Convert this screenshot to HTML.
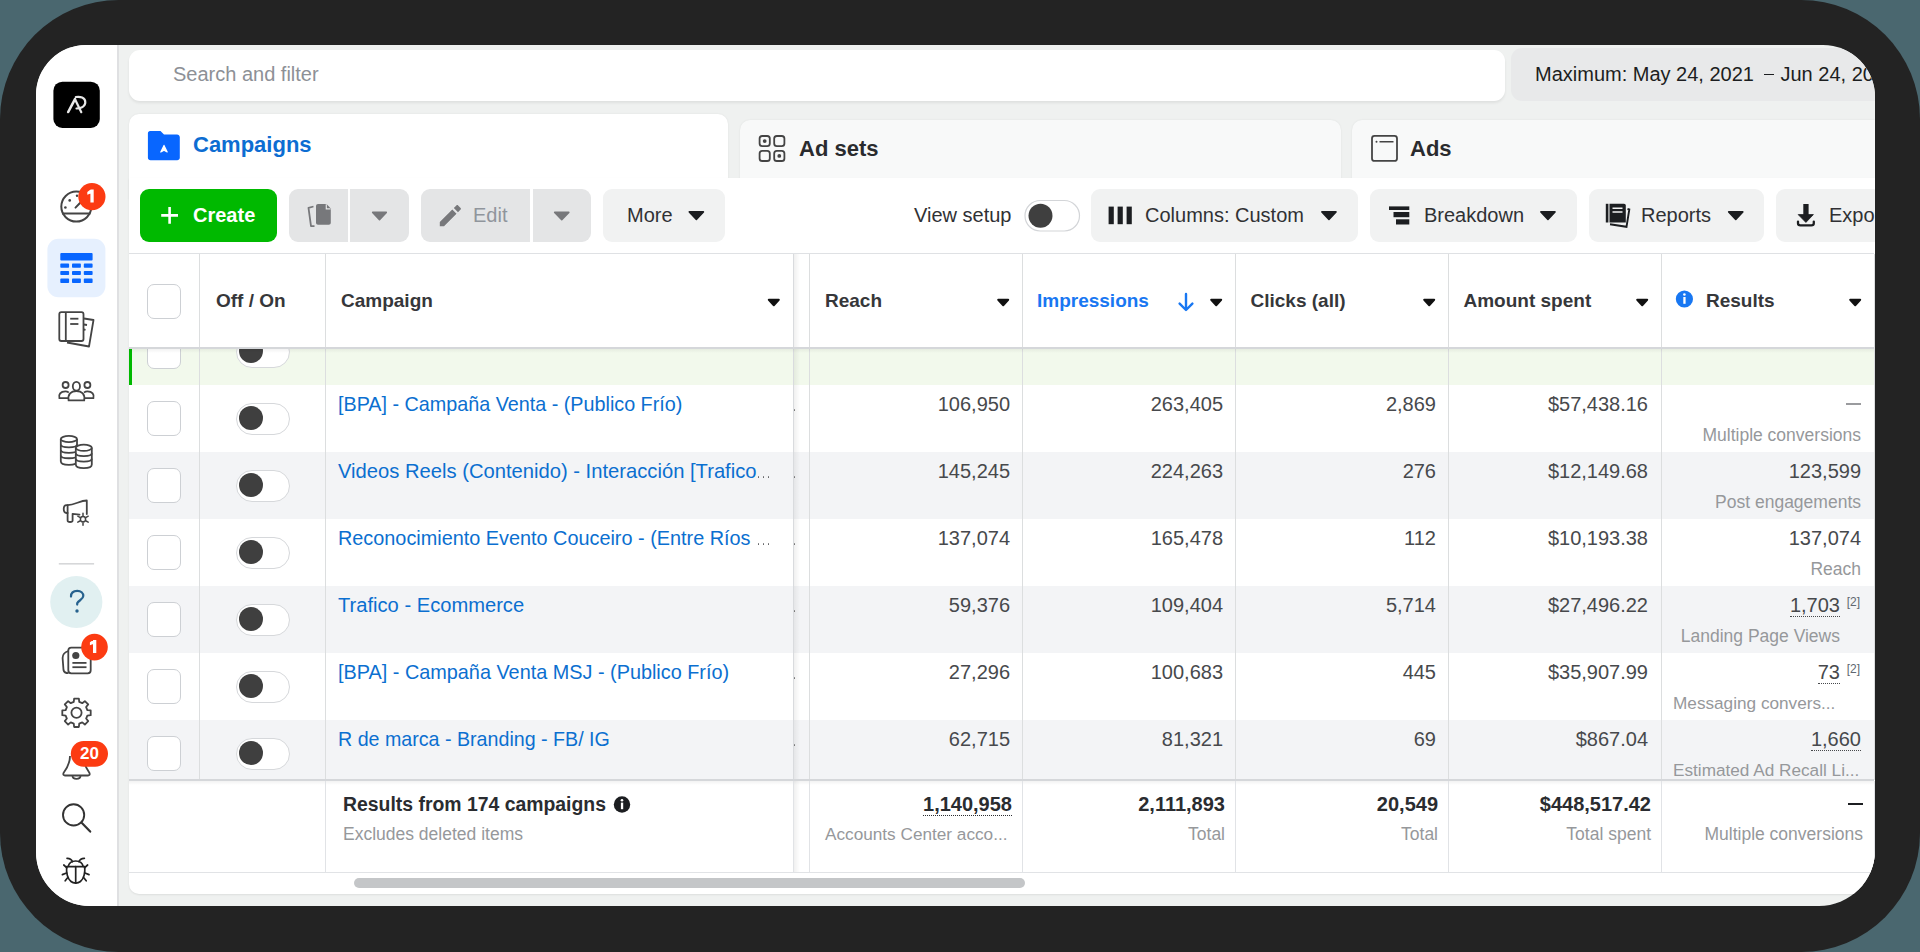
<!DOCTYPE html>
<html><head><meta charset="utf-8">
<style>
*{box-sizing:border-box;margin:0;padding:0}
html,body{width:1920px;height:952px;overflow:hidden;background:#4a676f;font-family:"Liberation Sans",sans-serif;}
.frame{position:absolute;left:0;top:0;width:1920px;height:952px;background:#232323;border-radius:119px;}
.screen{position:absolute;left:36px;top:45px;width:1839px;height:861px;border-radius:50px 52px 56px 54px;overflow:hidden;background:#eff1f0;}
.pg{position:absolute;left:-36px;top:-45px;width:1920px;height:952px;}
.a{position:absolute;white-space:nowrap;line-height:1}
svg{position:absolute;overflow:visible}
</style></head><body>
<div class="frame"></div>
<div class="screen"><div class="pg">

<div class="a" style="left:36px;top:45px;width:81px;height:861px;background:#fff;"></div>
<div class="a" style="left:117px;top:45px;width:2px;height:861px;background:#dfe0e2;"></div>
<svg style="left:0;top:0" width="120" height="952" viewBox="0 0 120 952">
<rect x="53.4" y="81.7" width="46.4" height="46.3" rx="9" fill="#000"/>
<g stroke="#e8e8e8" stroke-width="2.2" fill="none" stroke-linecap="round" stroke-linejoin="round">
<path d="M68.2 112 L75 99.2" stroke-width="2.6"/>
<path d="M75 99.2 L81.3 112.2"/>
<path d="M75.8 97 C80 96.3 85.3 97.3 85.3 102.3 C85.3 106.6 80.5 108.3 76.5 108.5"/>
</g>
<!-- gauge -->
<g stroke="#444" stroke-width="2" fill="none">
<circle cx="76.3" cy="206.6" r="15"/>
<line x1="62" y1="213.5" x2="90.5" y2="213.5"/>
<line x1="75.5" y1="207.6" x2="80" y2="203" stroke-linecap="round"/>
</g>
<g fill="#444"><circle cx="69.7" cy="200.4" r="1.3"/><circle cx="65.4" cy="207.5" r="1.3"/><circle cx="77" cy="195.7" r="1.2"/></g>
<circle cx="91.9" cy="196.7" r="13.6" fill="#fc3b12"/>
<path d="M90.4 189.6 L93.7 189.6 L93.7 202.6 L90.4 202.6 Z M87.3 191.9 L90.6 189.6 L90.6 193.6 L87.3 194.8 Z" fill="#fff"/>
<!-- active grid -->
<rect x="47.4" y="238.8" width="58" height="58.4" rx="11" fill="#e6f0fe"/>
<g fill="#0866ff">
<rect x="60.3" y="253" width="32.3" height="7.4" rx="1"/>
<rect x="60.3" y="263.6" width="8.8" height="4.2" rx="0.8"/><rect x="72" y="263.6" width="8.9" height="4.2" rx="0.8"/><rect x="83.8" y="263.6" width="8.8" height="4.2" rx="0.8"/>
<rect x="60.3" y="270.9" width="8.8" height="4.2" rx="0.8"/><rect x="72" y="270.9" width="8.9" height="4.2" rx="0.8"/><rect x="83.8" y="270.9" width="8.8" height="4.2" rx="0.8"/>
<rect x="60.3" y="278.6" width="8.8" height="4.4" rx="0.8"/><rect x="72" y="278.6" width="8.9" height="4.4" rx="0.8"/><rect x="83.8" y="278.6" width="8.8" height="4.4" rx="0.8"/>
</g>
<!-- reports book -->
<g stroke="#444" stroke-width="1.8" fill="none" stroke-linejoin="round">
<path d="M84 318.5 L93.5 320 L89 346.5 L67 342.5"/>
<rect x="59.3" y="312.2" width="24.2" height="28.8" rx="2"/>
<line x1="65.8" y1="312.5" x2="65.8" y2="341"/>
<line x1="70.2" y1="318.7" x2="78.4" y2="318.7"/>
<line x1="70.2" y1="324" x2="78.4" y2="324"/>
<line x1="84" y1="324.5" x2="87" y2="325"/>
<line x1="84" y1="329.5" x2="85.5" y2="329.8"/>
</g>
<!-- people -->
<g stroke="#444" stroke-width="1.8" fill="none">
<ellipse cx="76.4" cy="386.2" rx="3.6" ry="4.4"/>
<circle cx="65.6" cy="385" r="3"/>
<circle cx="87.4" cy="385" r="3"/>
<path d="M68.6 400.4 C67.5 394 71 391 76.4 391 C81.8 391 85.3 394 84.2 400.4 Z"/>
<path d="M68.8 392.4 C67.5 391.6 66.6 391.4 65.4 391.4 C60.5 391.4 58.3 394.5 59.4 398.2 L68.6 398.2"/>
<path d="M84 392.4 C85.3 391.6 86.2 391.4 87.4 391.4 C92.3 391.4 94.5 394.5 93.4 398.2 L84.2 398.2"/>
</g>
<!-- coins -->
<g stroke="#444" stroke-width="1.8" fill="#fff">
<path d="M60.8 439 L60.8 461.2 C60.8 466 77 466 77 461.2 L77 439"/>
<ellipse cx="68.9" cy="439" rx="8.1" ry="3.1"/>
<path d="M60.8 444.6 C60.8 448.4 77 448.4 77 444.6 M60.8 450 C60.8 453.8 77 453.8 77 450 M60.8 455.4 C60.8 459.2 77 459.2 77 455.4" fill="none"/>
<path d="M75.8 447.8 L75.8 464.6 C75.8 469.4 91.8 469.4 91.8 464.6 L91.8 447.8"/>
<ellipse cx="83.8" cy="447.8" rx="8" ry="3.1"/>
<path d="M75.8 453.2 C75.8 457 91.8 457 91.8 453.2 M75.8 458.8 C75.8 462.6 91.8 462.6 91.8 458.8" fill="none"/>
</g>
<!-- megaphone -->
<g stroke="#444" stroke-width="1.8" fill="none" stroke-linejoin="round" stroke-linecap="round">
<path d="M67.6 505.2 L66.5 505.2 C62.8 505.2 62.8 513 66.5 513 L67.6 513 Z"/>
<path d="M67.6 505.2 C75 505 80 500.5 86.8 500.5 L86.8 514"/>
<path d="M67.6 513 L67.6 520.5 C67.6 522.5 72.6 522.5 72.6 520.5 L72.6 513.8 L79.5 514.6"/>
</g>
<g stroke="#444" stroke-width="1.5" fill="none" stroke-linecap="round">
<circle cx="83" cy="519.2" r="2.6"/>
<path d="M83 513.2 L83 515.6 M83 522.8 L83 525.2 M77.8 516.2 L79.9 517.4 M86.1 521 L88.2 522.2 M77.8 522.2 L79.9 521 M86.1 517.4 L88.2 516.2"/>
</g>
<!-- divider -->
<rect x="58.8" y="563" width="35.3" height="1.6" fill="#d6d7d9"/>
<!-- help -->
<circle cx="76.3" cy="602" r="26.1" fill="#e1f0f1"/>
<path d="M71 596.6 C71 592.6 73.9 590.9 77.3 590.9 C80.9 590.9 83.3 593 83.3 596.1 C83.3 599.4 78.4 600.4 77.2 603.2 L77.2 604.6" stroke="#27628e" stroke-width="2.2" fill="none" stroke-linecap="round"/>
<circle cx="77" cy="611" r="1.7" fill="#27628e"/>
<!-- feed -->
<g stroke="#444" stroke-width="1.8" fill="none" stroke-linejoin="round">
<path d="M68.4 651 C65 652 62.6 654 62.6 658 L63.5 670 C64 672.5 66.5 673.2 68.5 673.2"/>
<rect x="68.3" y="647.6" width="22.4" height="25.7" rx="3"/>
<line x1="72.4" y1="662.9" x2="86.5" y2="662.9"/>
<line x1="72.4" y1="667.2" x2="86.5" y2="667.2"/>
</g>
<circle cx="75.8" cy="655.5" r="3.6" fill="#444"/>
<circle cx="94.5" cy="647.1" r="13.3" fill="#fc3b12"/>
<path d="M93 640 L96.3 640 L96.3 653 L93 653 Z M89.9 642.3 L93.2 640 L93.2 644 L89.9 645.2 Z" fill="#fff"/>
<!-- gear -->
<g stroke="#444" stroke-width="1.8" fill="none">
<circle cx="76.5" cy="712.8" r="5.1"/>
<path id="gear" d=""/>
</g>
<path d="M73.76 701.94 L74.14 698.60 L78.86 698.60 L79.24 701.94 L82.24 703.18 L84.87 701.08 L88.22 704.43 L86.12 707.06 L87.36 710.06 L90.70 710.44 L90.70 715.16 L87.36 715.54 L86.12 718.54 L88.22 721.17 L84.87 724.52 L82.24 722.42 L79.24 723.66 L78.86 727.00 L74.14 727.00 L73.76 723.66 L70.76 722.42 L68.13 724.52 L64.78 721.17 L66.88 718.54 L65.64 715.54 L62.30 715.16 L62.30 710.44 L65.64 710.06 L66.88 707.06 L64.78 704.43 L68.13 701.08 L70.76 703.18 Z" stroke="#444" stroke-width="1.8" fill="none" stroke-linejoin="round"/>
<!-- bell -->
<g stroke="#444" stroke-width="1.8" fill="none" stroke-linejoin="round">
<path d="M70 756 C70 762 68 767 63.5 773 C63 774.5 63.5 775.5 65 775.5 L88 775.5 C89.5 775.5 90 774.5 89.5 773 C85.5 767 83 762 83 756"/>
<path d="M72.5 775.8 C72.5 779.8 80.5 779.8 80.5 775.8"/>
</g>
<rect x="70.8" y="741" width="37.2" height="25.7" rx="12.85" fill="#fc3b12"/>
<!-- search -->
<g stroke="#333" stroke-width="1.9" fill="none" stroke-linecap="round">
<circle cx="73.6" cy="814.9" r="10.6"/>
<line x1="81.4" y1="822.6" x2="90.2" y2="831.6" stroke-width="2.2"/>
</g>
<!-- bug -->
<g stroke="#222" stroke-width="1.7" fill="none" stroke-linecap="round" stroke-linejoin="round">
<path d="M66.6 866.6 C66.2 873 67.5 878.5 71 881.5 C73.5 883.6 77.9 883.6 80.4 881.5 C83.9 878.5 85.2 873 84.8 866.6 Z"/>
<path d="M68.2 866.4 C69 862.8 72 861 75.7 861 C79.4 861 82.4 862.8 83.2 866.4"/>
<path d="M75.7 866.6 L75.7 883.2"/>
<path d="M72.5 861.6 C71.5 859.3 69.5 858.2 67 858.3 M78.9 861.6 C79.9 859.3 81.9 858.2 84.4 858.3"/>
<path d="M66.9 867.8 L63.8 865 M84.5 867.8 L87.6 865 M66.5 873 L62.4 874.6 M84.9 873 L89 874.6 M67.6 877.7 L65.2 880.8 M83.8 877.7 L86.2 880.8"/>
</g>
</svg>
<div class="a" style="left:70.8px;top:745px;width:37.2px;text-align:center;font-size:17px;font-weight:bold;color:#fff">20</div>
<div class="a" style="left:129px;top:50px;width:1376px;height:51px;background:#fff;border-radius:11px;box-shadow:0 2px 3px rgba(0,0,0,0.07)"></div>
<div class="a" style="left:173px;top:64px;font-size:20px;color:#8d9096;font-weight:normal;">Search and filter</div>
<div class="a" style="left:1511px;top:48px;width:429px;height:53px;background:#e8e9ea;border-radius:11px"></div>
<div class="a" style="left:1535px;top:64px;font-size:20px;color:#1c1e21;font-weight:normal;">Maximum: May 24, 2021</div>
<div class="a" style="left:1763.5px;top:73.5px;width:10.0px;height:1.5px;background:#1c1e21;"></div>
<div class="a" style="left:1780.5px;top:64px;font-size:20px;color:#1c1e21;font-weight:normal;">Jun 24, 2021</div>
<div class="a" style="left:740px;top:120px;width:601px;height:70px;background:#f8f9f9;border-radius:10px 10px 0 0;box-shadow:0 0 2px rgba(0,0,0,0.08)"></div>
<div class="a" style="left:1352px;top:120px;width:598px;height:70px;background:#f8f9f9;border-radius:10px 10px 0 0;box-shadow:0 0 2px rgba(0,0,0,0.08)"></div>
<div class="a" style="left:129px;top:114px;width:599px;height:86px;background:#fff;border-radius:10px 10px 0 0;box-shadow:0 0 2px rgba(0,0,0,0.08)"></div>
<div class="a" style="left:129px;top:178px;width:1831px;height:716px;background:#fff;border-radius:0 0 10px 10px;box-shadow:0 1px 2px rgba(0,0,0,0.08)"></div>
<div class="a" style="left:193px;top:134px;font-size:22px;color:#0d6dd2;font-weight:bold;">Campaigns</div>
<div class="a" style="left:799px;top:138px;font-size:22px;color:#2a2b2e;font-weight:bold;">Ad sets</div>
<div class="a" style="left:1410px;top:138px;font-size:22px;color:#2a2b2e;font-weight:bold;">Ads</div>
<svg style="left:0;top:0" width="1920" height="260" viewBox="0 0 1920 260">
<!-- folder -->
<path d="M150 131 L160.5 131 L164 134.5 L177 134.5 C178.5 134.5 179.8 135.8 179.8 137.3 L179.8 157.8 C179.8 159.2 178.6 160.3 177.2 160.3 L150.5 160.3 C149 160.3 147.9 159.2 147.9 157.8 L147.9 133.2 C147.9 132 148.9 131 150 131 Z" fill="#0866ff"/>
<path d="M160.8 152 L164 145.4 L167.2 152 L164 150.2 Z" fill="#fff" stroke="#fff" stroke-width="1.2" stroke-linejoin="round"/>
<!-- adsets grid -->
<g stroke="#444" stroke-width="1.8" fill="none">
<rect x="759.6" y="136" width="10.2" height="10.2" rx="2.6"/>
<rect x="774.2" y="136" width="10.2" height="10.2" rx="2.6"/>
<rect x="759.6" y="150.8" width="10.2" height="10.2" rx="2.6"/>
<rect x="774.2" y="150.8" width="10.2" height="10.2" rx="2.6"/>
</g>
<circle cx="764.7" cy="141.1" r="1.9" fill="#444"/>
<circle cx="779.3" cy="155.9" r="1.9" fill="#444"/>
<!-- ads window -->
<rect x="1372" y="135.9" width="25" height="25" rx="2.5" stroke="#444" stroke-width="1.8" fill="none"/>
<circle cx="1376.5" cy="141.8" r="1" fill="#444"/>
<line x1="1379.5" y1="141.8" x2="1393.5" y2="141.8" stroke="#444" stroke-width="1.6"/>
</svg>
<div class="a" style="left:140px;top:189px;width:137px;height:53px;background:#00b900;border-radius:9px"></div>
<div class="a" style="left:289px;top:189px;width:59px;height:53px;background:#e4e5e6;border-radius:9px 0 0 9px"></div>
<div class="a" style="left:350px;top:189px;width:59px;height:53px;background:#e4e5e6;border-radius:0 9px 9px 0"></div>
<div class="a" style="left:421px;top:189px;width:109px;height:53px;background:#e4e5e6;border-radius:9px 0 0 9px"></div>
<div class="a" style="left:533px;top:189px;width:58px;height:53px;background:#e4e5e6;border-radius:0 9px 9px 0"></div>
<div class="a" style="left:603px;top:189px;width:122px;height:53px;background:#f1f2f2;border-radius:9px"></div>
<div class="a" style="left:1091px;top:189px;width:267px;height:53px;background:#f1f2f2;border-radius:9px"></div>
<div class="a" style="left:1370px;top:189px;width:207px;height:53px;background:#f1f2f2;border-radius:9px"></div>
<div class="a" style="left:1589px;top:189px;width:175px;height:53px;background:#f1f2f2;border-radius:9px"></div>
<div class="a" style="left:1776px;top:189px;width:214px;height:53px;background:#f1f2f2;border-radius:9px"></div>
<div class="a" style="left:193px;top:205px;font-size:20px;color:#fff;font-weight:bold;">Create</div>
<div class="a" style="left:473px;top:205px;font-size:20px;color:#90959c;font-weight:normal;">Edit</div>
<div class="a" style="left:627px;top:205px;font-size:20px;color:#303134;font-weight:normal;">More</div>
<div class="a" style="left:914px;top:205px;font-size:20px;color:#303134;font-weight:normal;">View setup</div>
<div class="a" style="left:1145px;top:205px;font-size:20px;color:#303134;font-weight:normal;">Columns: Custom</div>
<div class="a" style="left:1424px;top:205px;font-size:20px;color:#303134;font-weight:normal;">Breakdown</div>
<div class="a" style="left:1641px;top:205px;font-size:20px;color:#303134;font-weight:normal;">Reports</div>
<div class="a" style="left:1829px;top:205px;font-size:20px;color:#303134;font-weight:normal;">Export</div>
<svg style="left:0;top:0" width="1920" height="260" viewBox="0 0 1920 260">
<path d="M169.6 207 L169.6 223.8 M161.2 215.4 L178 215.4" stroke="#fff" stroke-width="2.6"/>
<path d="M318 204 L326.5 204 L330.8 208.5 L330.8 222.8 C330.8 224 329.9 224.8 328.8 224.8 L318 224.8 C316.9 224.8 316 224 316 222.8 L316 206 C316 204.9 316.9 204 318 204 Z" fill="#77787b"/>
<path d="M326.3 204.2 L326.3 208.8 L330.6 208.8" stroke="#e4e5e6" stroke-width="1.2" fill="none"/>
<path d="M313.5 206.5 L308.5 207.8 L311 226.2 L314.5 226.2" stroke="#77787b" stroke-width="1.8" fill="none" stroke-linejoin="round"/>
<path d="M372.7 212.4 L386.3 212.4 L379.5 219.6 Z" fill="#77787b" stroke="#77787b" stroke-width="1.6" stroke-linejoin="round"/>
<path d="M439.8 222 L439.8 226.2 L444 226.2 L456.5 213.7 L452.3 209.5 Z M458 212.2 L460.6 209.6 C461.1 209.1 461.1 208.4 460.6 207.9 L458.1 205.4 C457.6 204.9 456.9 204.9 456.4 205.4 L453.8 208 Z" fill="#77787b"/>
<path d="M554.7 212.4 L568.8 212.4 L561.75 219.6 Z" fill="#77787b" stroke="#77787b" stroke-width="1.6" stroke-linejoin="round"/>
<path d="M689.3000000000001 211.9 L703.4 211.9 L696.35 219.4 Z" fill="#1c1e21" stroke="#1c1e21" stroke-width="1.6" stroke-linejoin="round"/>
<rect x="1108.6" y="206.6" width="5.2" height="17.6" fill="#1c1e21"/><rect x="1117.6" y="206.6" width="5.2" height="17.6" fill="#1c1e21"/><rect x="1126.6" y="206.6" width="5.2" height="17.6" fill="#1c1e21"/>
<path d="M1321.9 211.9 L1336.0 211.9 L1328.95 219.4 Z" fill="#1c1e21" stroke="#1c1e21" stroke-width="1.6" stroke-linejoin="round"/>
<rect x="1389" y="206.4" width="20.3" height="3.6" fill="#1c1e21"/><rect x="1393.5" y="212" width="15.8" height="5.2" fill="#1c1e21"/><rect x="1396" y="219.3" width="13.3" height="5.2" fill="#1c1e21"/>
<path d="M1540.9 211.9 L1555.0 211.9 L1547.95 219.4 Z" fill="#1c1e21" stroke="#1c1e21" stroke-width="1.6" stroke-linejoin="round"/>
<path d="M1609.5 203.8 L1624 203.8 C1625 203.8 1625.8 204.6 1625.8 205.6 L1625.8 222.5 L1609.5 222.5 Z" fill="#1c1e21"/><rect x="1605.8" y="203.8" width="2.6" height="18.7" fill="#1c1e21"/>
<path d="M1612.5 208.2 L1622.5 208.2 M1612.5 212 L1622.5 212" stroke="#f1f2f2" stroke-width="1.6"/>
<path d="M1627.5 209 L1629.3 209.5 L1626.5 226.8 L1610 224.2" stroke="#1c1e21" stroke-width="1.9" fill="none"/>
<path d="M1728.7 211.9 L1742.8 211.9 L1735.75 219.4 Z" fill="#1c1e21" stroke="#1c1e21" stroke-width="1.6" stroke-linejoin="round"/>
<rect x="1803.3" y="204" width="5.3" height="11.5" fill="#1c1e21"/><path d="M1798.2 214.6 L1813.4 214.6 L1805.9 222.4 Z" fill="#1c1e21" stroke="#1c1e21" stroke-width="0.8" stroke-linejoin="round"/><path d="M1798 221.6 L1798 223.3 C1798 224.8 1799 225.4 1800.5 225.4 L1811.3 225.4 C1812.8 225.4 1813.8 224.8 1813.8 223.3 L1813.8 221.6" stroke="#1c1e21" stroke-width="2.3" fill="none" stroke-linecap="round"/>
<rect x="1025" y="200.5" width="54.5" height="30.5" rx="15.25" fill="#fff" stroke="#d3d5d8" stroke-width="1.2"/>
<circle cx="1040.5" cy="215.7" r="12" fill="#3f3f3f"/>
</svg>
<div class="a" style="left:129px;top:253px;width:1745px;height:1px;background:#dfe1e4;"></div>
<div class="a" style="left:199px;top:254px;width:1px;height:94px;background:#dcdedf;"></div>
<div class="a" style="left:325px;top:254px;width:1px;height:94px;background:#dcdedf;"></div>
<div class="a" style="left:809px;top:254px;width:1px;height:94px;background:#dcdedf;"></div>
<div class="a" style="left:1022px;top:254px;width:1px;height:94px;background:#dcdedf;"></div>
<div class="a" style="left:1235px;top:254px;width:1px;height:94px;background:#dcdedf;"></div>
<div class="a" style="left:1448px;top:254px;width:1px;height:94px;background:#dcdedf;"></div>
<div class="a" style="left:1661px;top:254px;width:1px;height:94px;background:#dcdedf;"></div>
<div class="a" style="left:1874px;top:254px;width:1px;height:94px;background:#dcdedf;"></div>
<div class="a" style="left:146.7px;top:284px;width:34.30000000000001px;height:34.69999999999999px;background:#fff;border:1.3px solid #cdd0d4;border-radius:7px"></div>
<div class="a" style="left:216px;top:291px;font-size:19px;color:#36373a;font-weight:bold;">Off / On</div>
<div class="a" style="left:341px;top:291px;font-size:19px;color:#36373a;font-weight:bold;">Campaign</div>
<div class="a" style="left:825px;top:291px;font-size:19px;color:#36373a;font-weight:bold;">Reach</div>
<div class="a" style="left:1037px;top:291px;font-size:19px;color:#1877f2;font-weight:bold;">Impressions</div>
<div class="a" style="left:1250.5px;top:291px;font-size:19px;color:#36373a;font-weight:bold;">Clicks (all)</div>
<div class="a" style="left:1463.5px;top:291px;font-size:19px;color:#36373a;font-weight:bold;">Amount spent</div>
<div class="a" style="left:1706px;top:291px;font-size:19px;color:#36373a;font-weight:bold;">Results</div>
<div class="a" style="left:129px;top:348px;width:1745px;height:37px;background:#f2f9ec;"></div>
<div class="a" style="left:129px;top:348px;width:3px;height:37px;background:#00b900;"></div>
<div class="a" style="left:0;top:348px;width:1920px;height:37px;overflow:hidden"><div class="a" style="left:0;top:-348px;width:1920px;height:952px"><div class="a" style="left:146.7px;top:334px;width:34.30000000000001px;height:35px;background:#fff;border:1.3px solid #cdd0d4;border-radius:7px"></div><div class="a" style="left:235.6px;top:335.5px;width:54.79999999999998px;height:32.0px;background:#fff;border:1.3px solid #d6d8db;border-radius:16px"></div><div class="a" style="left:239.3px;top:339.3px;width:24.0px;height:24.0px;background:#3f3f3f;border-radius:50%"></div></div></div>
<div class="a" style="left:129px;top:385px;width:1745px;height:67px;background:#fff;"></div>
<div class="a" style="left:129px;top:452px;width:1745px;height:67px;background:#f3f4f6;"></div>
<div class="a" style="left:129px;top:519px;width:1745px;height:67px;background:#fff;"></div>
<div class="a" style="left:129px;top:586px;width:1745px;height:67px;background:#f3f4f6;"></div>
<div class="a" style="left:129px;top:653px;width:1745px;height:67px;background:#fff;"></div>
<div class="a" style="left:129px;top:720px;width:1745px;height:67px;background:#f3f4f6;"></div>
<div class="a" style="left:146.7px;top:401px;width:34.30000000000001px;height:35px;background:#fff;border:1.3px solid #cdd0d4;border-radius:7px"></div><div class="a" style="left:235.6px;top:402.5px;width:54.79999999999998px;height:32.0px;background:#fff;border:1.3px solid #d6d8db;border-radius:16px"></div><div class="a" style="left:239.3px;top:406.3px;width:24.0px;height:24.0px;background:#3f3f3f;border-radius:50%"></div>
<div class="a" style="left:338px;top:395px;font-size:19.75px;color:#0b6fd0;font-weight:normal;">[BPA] - Campaña Venta - (Publico Frío)</div>
<div class="a" style="left:793.5px;top:409px;width:1.5px;height:1.5px;background:#777;border-radius:50%"></div>
<div class="a" style="right:910px;top:394px;font-size:20px;color:#47494c;font-weight:normal;">106,950</div>
<div class="a" style="right:697px;top:394px;font-size:20px;color:#47494c;font-weight:normal;">263,405</div>
<div class="a" style="right:484px;top:394px;font-size:20px;color:#47494c;font-weight:normal;">2,869</div>
<div class="a" style="right:272px;top:394px;font-size:20px;color:#47494c;font-weight:normal;">$57,438.16</div>
<div class="a" style="left:1846px;top:403px;width:15px;height:1.6000000000000227px;background:#9a9b9e;"></div>
<div class="a" style="right:59px;top:426.5px;font-size:17.5px;color:#96989b;font-weight:normal;">Multiple conversions</div>
<div class="a" style="left:146.7px;top:468px;width:34.30000000000001px;height:35px;background:#fff;border:1.3px solid #cdd0d4;border-radius:7px"></div><div class="a" style="left:235.6px;top:469.5px;width:54.79999999999998px;height:32.0px;background:#fff;border:1.3px solid #d6d8db;border-radius:16px"></div><div class="a" style="left:239.3px;top:473.3px;width:24.0px;height:24.0px;background:#3f3f3f;border-radius:50%"></div>
<div class="a" style="left:338px;top:461px;font-size:20.2px;color:#0b6fd0;font-weight:normal;">Videos Reels (Contenido) - Interacción [Trafico</div>
<div class="a" style="left:757.7px;top:476.2px;width:1.7999999999999545px;height:1.8000000000000114px;background:#5f6063;border-radius:50%"></div>
<div class="a" style="left:762.7px;top:476.2px;width:1.7999999999999545px;height:1.8000000000000114px;background:#5f6063;border-radius:50%"></div>
<div class="a" style="left:767.7px;top:476.2px;width:1.7999999999999545px;height:1.8000000000000114px;background:#5f6063;border-radius:50%"></div>
<div class="a" style="left:793.5px;top:476px;width:1.5px;height:1.5px;background:#777;border-radius:50%"></div>
<div class="a" style="right:910px;top:461px;font-size:20px;color:#47494c;font-weight:normal;">145,245</div>
<div class="a" style="right:697px;top:461px;font-size:20px;color:#47494c;font-weight:normal;">224,263</div>
<div class="a" style="right:484px;top:461px;font-size:20px;color:#47494c;font-weight:normal;">276</div>
<div class="a" style="right:272px;top:461px;font-size:20px;color:#47494c;font-weight:normal;">$12,149.68</div>
<div class="a" style="right:59px;top:461px;font-size:20px;color:#47494c;font-weight:normal;">123,599</div>
<div class="a" style="right:59px;top:493.5px;font-size:17.5px;color:#96989b;font-weight:normal;">Post engagements</div>
<div class="a" style="left:146.7px;top:535px;width:34.30000000000001px;height:35px;background:#fff;border:1.3px solid #cdd0d4;border-radius:7px"></div><div class="a" style="left:235.6px;top:536.5px;width:54.79999999999998px;height:32.0px;background:#fff;border:1.3px solid #d6d8db;border-radius:16px"></div><div class="a" style="left:239.3px;top:540.3px;width:24.0px;height:24.0px;background:#3f3f3f;border-radius:50%"></div>
<div class="a" style="left:338px;top:529px;font-size:19.85px;color:#0b6fd0;font-weight:normal;">Reconocimiento Evento Couceiro - (Entre Ríos</div>
<div class="a" style="left:757.7px;top:543.2px;width:1.7999999999999545px;height:1.7999999999999545px;background:#5f6063;border-radius:50%"></div>
<div class="a" style="left:762.7px;top:543.2px;width:1.7999999999999545px;height:1.7999999999999545px;background:#5f6063;border-radius:50%"></div>
<div class="a" style="left:767.7px;top:543.2px;width:1.7999999999999545px;height:1.7999999999999545px;background:#5f6063;border-radius:50%"></div>
<div class="a" style="left:793.5px;top:543px;width:1.5px;height:1.5px;background:#777;border-radius:50%"></div>
<div class="a" style="right:910px;top:528px;font-size:20px;color:#47494c;font-weight:normal;">137,074</div>
<div class="a" style="right:697px;top:528px;font-size:20px;color:#47494c;font-weight:normal;">165,478</div>
<div class="a" style="right:484px;top:528px;font-size:20px;color:#47494c;font-weight:normal;">112</div>
<div class="a" style="right:272px;top:528px;font-size:20px;color:#47494c;font-weight:normal;">$10,193.38</div>
<div class="a" style="right:59px;top:528px;font-size:20px;color:#47494c;font-weight:normal;">137,074</div>
<div class="a" style="right:59px;top:560.5px;font-size:17.5px;color:#96989b;font-weight:normal;">Reach</div>
<div class="a" style="left:146.7px;top:602px;width:34.30000000000001px;height:35px;background:#fff;border:1.3px solid #cdd0d4;border-radius:7px"></div><div class="a" style="left:235.6px;top:603.5px;width:54.79999999999998px;height:32.0px;background:#fff;border:1.3px solid #d6d8db;border-radius:16px"></div><div class="a" style="left:239.3px;top:607.3px;width:24.0px;height:24.0px;background:#3f3f3f;border-radius:50%"></div>
<div class="a" style="left:338px;top:595px;font-size:20.15px;color:#0b6fd0;font-weight:normal;">Trafico - Ecommerce</div>
<div class="a" style="left:793.5px;top:610px;width:1.5px;height:1.5px;background:#777;border-radius:50%"></div>
<div class="a" style="right:910px;top:595px;font-size:20px;color:#47494c;font-weight:normal;">59,376</div>
<div class="a" style="right:697px;top:595px;font-size:20px;color:#47494c;font-weight:normal;">109,404</div>
<div class="a" style="right:484px;top:595px;font-size:20px;color:#47494c;font-weight:normal;">5,714</div>
<div class="a" style="right:272px;top:595px;font-size:20px;color:#47494c;font-weight:normal;">$27,496.22</div>
<div class="a" style="right:80px;top:595px;font-size:20px;color:#47494c;font-weight:normal;border-bottom:1.5px dotted #47494c;padding-bottom:1px">1,703</div>
<div class="a" style="right:60px;top:596px;font-size:12px;color:#606770;font-weight:normal;">[2]</div>
<div class="a" style="right:80px;top:627.5px;font-size:17.5px;color:#96989b;font-weight:normal;">Landing Page Views</div>
<div class="a" style="left:146.7px;top:669px;width:34.30000000000001px;height:35px;background:#fff;border:1.3px solid #cdd0d4;border-radius:7px"></div><div class="a" style="left:235.6px;top:670.5px;width:54.79999999999998px;height:32.0px;background:#fff;border:1.3px solid #d6d8db;border-radius:16px"></div><div class="a" style="left:239.3px;top:674.3px;width:24.0px;height:24.0px;background:#3f3f3f;border-radius:50%"></div>
<div class="a" style="left:338px;top:663px;font-size:19.85px;color:#0b6fd0;font-weight:normal;">[BPA] - Campaña Venta MSJ - (Publico Frío)</div>
<div class="a" style="left:793.5px;top:677px;width:1.5px;height:1.5px;background:#777;border-radius:50%"></div>
<div class="a" style="right:910px;top:662px;font-size:20px;color:#47494c;font-weight:normal;">27,296</div>
<div class="a" style="right:697px;top:662px;font-size:20px;color:#47494c;font-weight:normal;">100,683</div>
<div class="a" style="right:484px;top:662px;font-size:20px;color:#47494c;font-weight:normal;">445</div>
<div class="a" style="right:272px;top:662px;font-size:20px;color:#47494c;font-weight:normal;">$35,907.99</div>
<div class="a" style="right:80px;top:662px;font-size:20px;color:#47494c;font-weight:normal;border-bottom:1.5px dotted #47494c;padding-bottom:1px">73</div>
<div class="a" style="right:60px;top:663px;font-size:12px;color:#606770;font-weight:normal;">[2]</div>
<div class="a" style="left:1673px;top:694.5px;font-size:17.2px;color:#96989b;font-weight:normal;">Messaging convers...</div>
<div class="a" style="left:146.7px;top:736px;width:34.30000000000001px;height:35px;background:#fff;border:1.3px solid #cdd0d4;border-radius:7px"></div><div class="a" style="left:235.6px;top:737.5px;width:54.79999999999998px;height:32.0px;background:#fff;border:1.3px solid #d6d8db;border-radius:16px"></div><div class="a" style="left:239.3px;top:741.3px;width:24.0px;height:24.0px;background:#3f3f3f;border-radius:50%"></div>
<div class="a" style="left:338px;top:730px;font-size:19.65px;color:#0b6fd0;font-weight:normal;">R de marca - Branding - FB/ IG</div>
<div class="a" style="left:793.5px;top:744px;width:1.5px;height:1.5px;background:#777;border-radius:50%"></div>
<div class="a" style="right:910px;top:729px;font-size:20px;color:#47494c;font-weight:normal;">62,715</div>
<div class="a" style="right:697px;top:729px;font-size:20px;color:#47494c;font-weight:normal;">81,321</div>
<div class="a" style="right:484px;top:729px;font-size:20px;color:#47494c;font-weight:normal;">69</div>
<div class="a" style="right:272px;top:729px;font-size:20px;color:#47494c;font-weight:normal;">$867.04</div>
<div class="a" style="right:59px;top:729px;font-size:20px;color:#47494c;font-weight:normal;border-bottom:1.5px dotted #47494c;padding-bottom:1px">1,660</div>
<div class="a" style="left:1673px;top:761.5px;font-size:17.2px;color:#96989b;font-weight:normal;">Estimated Ad Recall Li...</div>
<div class="a" style="left:199px;top:348px;width:1px;height:432px;background:#dcdedf;"></div>
<div class="a" style="left:325px;top:348px;width:1px;height:432px;background:#dcdedf;"></div>
<div class="a" style="left:809px;top:348px;width:1px;height:432px;background:#dcdedf;"></div>
<div class="a" style="left:1022px;top:348px;width:1px;height:432px;background:#dcdedf;"></div>
<div class="a" style="left:1235px;top:348px;width:1px;height:432px;background:#dcdedf;"></div>
<div class="a" style="left:1448px;top:348px;width:1px;height:432px;background:#dcdedf;"></div>
<div class="a" style="left:1661px;top:348px;width:1px;height:432px;background:#dcdedf;"></div>
<div class="a" style="left:1874px;top:348px;width:1px;height:432px;background:#dcdedf;"></div>
<div class="a" style="left:793px;top:254px;width:1px;height:526px;background:#d9dbde;"></div>
<div class="a" style="left:794px;top:254px;width:6px;height:526px;background:linear-gradient(90deg,rgba(0,0,0,0.06),rgba(0,0,0,0));"></div>
<div class="a" style="left:129px;top:347px;width:1745px;height:2px;background:#d5d7da;"></div>
<div class="a" style="left:129px;top:349px;width:1745px;height:4px;background:linear-gradient(180deg,rgba(0,0,0,0.05),rgba(0,0,0,0));"></div>
<svg style="left:0;top:0" width="1920" height="952" viewBox="0 0 1920 952">
<path d="M768.8000000000001 299.8 L778.8000000000001 299.8 L773.8000000000001 305.2 Z" fill="#111" stroke="#111" stroke-width="2" stroke-linejoin="round"/>
<path d="M998.2 299.8 L1008.2 299.8 L1003.2 305.2 Z" fill="#111" stroke="#111" stroke-width="2" stroke-linejoin="round"/>
<path d="M1211.2 299.8 L1221.2 299.8 L1216.2 305.2 Z" fill="#111" stroke="#111" stroke-width="2" stroke-linejoin="round"/>
<path d="M1424.2 299.8 L1434.2 299.8 L1429.2 305.2 Z" fill="#111" stroke="#111" stroke-width="2" stroke-linejoin="round"/>
<path d="M1637.2 299.8 L1647.2 299.8 L1642.2 305.2 Z" fill="#111" stroke="#111" stroke-width="2" stroke-linejoin="round"/>
<path d="M1850.2 299.8 L1860.2 299.8 L1855.2 305.2 Z" fill="#111" stroke="#111" stroke-width="2" stroke-linejoin="round"/>
<path d="M1186 294 L1186 309.5 M1179.6 303.6 L1186 310 L1192.4 303.6" stroke="#1877f2" stroke-width="2.4" fill="none" stroke-linecap="round" stroke-linejoin="round"/>
<circle cx="1684.4" cy="299" r="8.6" fill="#1877f2"/><rect x="1683.3" y="297" width="2.3" height="6.8" fill="#fff"/><circle cx="1684.4" cy="294.5" r="1.3" fill="#fff"/>
</svg>
<div class="a" style="left:129px;top:780px;width:1745px;height:92px;background:#fff;"></div>
<div class="a" style="left:129px;top:779px;width:1745px;height:2px;background:#d5d7da;"></div>
<div class="a" style="left:129px;top:781px;width:1745px;height:4px;background:linear-gradient(180deg,rgba(0,0,0,0.05),rgba(0,0,0,0));"></div>
<div class="a" style="left:325px;top:781px;width:1px;height:91px;background:#e1e3e6;"></div>
<div class="a" style="left:793px;top:781px;width:1px;height:91px;background:#e1e3e6;"></div>
<div class="a" style="left:809px;top:781px;width:1px;height:91px;background:#e1e3e6;"></div>
<div class="a" style="left:1022px;top:781px;width:1px;height:91px;background:#e1e3e6;"></div>
<div class="a" style="left:1235px;top:781px;width:1px;height:91px;background:#e1e3e6;"></div>
<div class="a" style="left:1448px;top:781px;width:1px;height:91px;background:#e1e3e6;"></div>
<div class="a" style="left:1661px;top:781px;width:1px;height:91px;background:#e1e3e6;"></div>
<div class="a" style="left:1874px;top:781px;width:1px;height:91px;background:#e1e3e6;"></div>
<div class="a" style="left:794px;top:781px;width:6px;height:91px;background:linear-gradient(90deg,rgba(0,0,0,0.06),rgba(0,0,0,0));"></div>
<div class="a" style="left:129px;top:872px;width:1745px;height:1px;background:#e1e3e6;"></div>
<div class="a" style="left:343px;top:795px;font-size:19.4px;color:#2a2c30;font-weight:bold;">Results from 174 campaigns</div>
<svg style="left:0;top:0" width="1920" height="952" viewBox="0 0 1920 952"><circle cx="622" cy="804.5" r="8.2" fill="#1c1e21"/><rect x="620.9" y="802.6" width="2.3" height="6.6" fill="#fff"/><circle cx="622" cy="800.2" r="1.3" fill="#fff"/></svg>
<div class="a" style="left:343px;top:826px;font-size:17.5px;color:#96989b;font-weight:normal;">Excludes deleted items</div>
<div class="a" style="right:908px;top:794px;font-size:20px;color:#2a2c30;font-weight:bold;border-bottom:1.5px dotted #2a2c30;padding-bottom:1px">1,140,958</div>
<div class="a" style="right:695px;top:794px;font-size:20px;color:#2a2c30;font-weight:bold;">2,111,893</div>
<div class="a" style="right:482px;top:794px;font-size:20px;color:#2a2c30;font-weight:bold;">20,549</div>
<div class="a" style="right:269px;top:794px;font-size:20px;color:#2a2c30;font-weight:bold;">$448,517.42</div>
<div class="a" style="left:1848px;top:803px;width:15px;height:2px;background:#1c1e21;"></div>
<div class="a" style="left:825px;top:826px;font-size:17.2px;color:#96989b;font-weight:normal;">Accounts Center acco...</div>
<div class="a" style="right:695px;top:826px;font-size:17.5px;color:#96989b;font-weight:normal;">Total</div>
<div class="a" style="right:482px;top:826px;font-size:17.5px;color:#96989b;font-weight:normal;">Total</div>
<div class="a" style="right:269px;top:826px;font-size:17.5px;color:#96989b;font-weight:normal;">Total spent</div>
<div class="a" style="right:57px;top:826px;font-size:17.5px;color:#96989b;font-weight:normal;">Multiple conversions</div>
<div class="a" style="left:354px;top:878px;width:671px;height:10px;background:#c4c6c8;border-radius:5px"></div>
</div></div>
</body></html>
